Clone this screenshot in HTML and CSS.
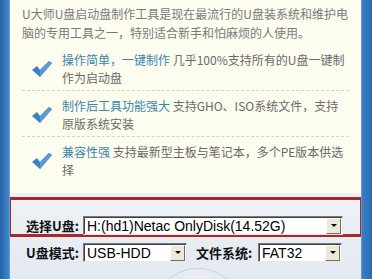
FILE: index.html
```html
<!DOCTYPE html>
<html lang="zh-CN">
<head>
  <meta charset="UTF-8">
  <title>U大师U盘启动盘制作工具</title>
  <link rel="stylesheet" href="styles.css">
</head>
<body>
  <div class="window">
    <div class="panel">

      <!-- intro -->
      <div class="intro">
        <p class="intro-text">U大师U盘启动盘制作工具是现在最流行的U盘装系统和维护电<br>脑的专用工具之一，特别适合新手和怕麻烦的人使用。</p>
        <ul class="features">
          <li class="feature">
            <svg class="check" viewBox="0 0 20 16" width="20" height="16"><path d="M0 9 L5 5 L8 9 L17 0 L20 2 L8 16 Z" fill="#3b82c4"/><path d="M8 16 L20 2 L17 0 L8 9 Z" fill="#5b9ad6"/></svg>
            <p class="feature-text"><span class="feature-title">操作简单，一键制作</span> 几乎100%支持所有的U盘一键制<br>作为启动盘</p>
          </li>
          <li class="feature">
            <svg class="check" viewBox="0 0 20 16" width="20" height="16"><path d="M0 9 L5 5 L8 9 L17 0 L20 2 L8 16 Z" fill="#3b82c4"/><path d="M8 16 L20 2 L17 0 L8 9 Z" fill="#5b9ad6"/></svg>
            <p class="feature-text"><span class="feature-title">制作后工具功能强大</span> 支持GHO、ISO系统文件，支持<br>原版系统安装</p>
          </li>
          <li class="feature">
            <svg class="check" viewBox="0 0 20 16" width="20" height="16"><path d="M0 9 L5 5 L8 9 L17 0 L20 2 L8 16 Z" fill="#3b82c4"/><path d="M8 16 L20 2 L17 0 L8 9 Z" fill="#5b9ad6"/></svg>
            <p class="feature-text"><span class="feature-title">兼容性强</span> 支持最新型主板与笔记本，多个PE版本供选<br>择</p>
          </li>
        </ul>
      </div>

      <!-- form -->
      <div class="form">
        <div class="disk-box">
          <div class="row">
            <span class="label">选择U盘:</span>
            <div class="select select-disk">
              <span class="select-value">H:(hd1)Netac OnlyDisk(14.52G)</span>
              <span class="select-btn"></span>
            </div>
          </div>
        </div>
        <div class="row row-options">
          <span class="label">U盘模式:</span>
          <div class="select select-mode">
            <span class="select-value">USB-HDD</span>
            <span class="select-btn"></span>
          </div>
          <span class="label label-fs">文件系统:</span>
          <div class="select select-fs">
            <span class="select-value">FAT32</span>
            <span class="select-btn"></span>
          </div>
        </div>
        <div class="start-btn"></div>
      </div>

    </div>
  </div>
</body>
</html>
```

FILE: styles.css
```css
body {
  margin: 0;
  width: 372px;
  height: 279px;
  overflow: hidden;
  font-family: 'Noto Sans CJK SC', sans-serif;
}

.window {
  height: 279px;
  padding: 0 11px 0 10px;
  background: linear-gradient(90deg, #2562a6 0, #3f86cb 9px, #8db6df 10px, #8db6df 361px, #3a7fc4 362px, #2a6aaf 372px);
}

.panel {
  height: 279px;
  display: flex;
  flex-direction: column;
}

.intro {
  background: #fcfcef;
  padding: 4px 12px 11px;
}

.intro-text {
  margin: 0;
  font-size: 12px;
  line-height: 19px;
  color: #7a7a7a;
  white-space: nowrap;
}

.features {
  list-style: none;
  margin: 3px 0 0;
  padding: 0;
}

.feature {
  display: flex;
  align-items: center;
  padding: 6px 0 3px;
  border-bottom: 1px dashed #d4d4c8;
}

.feature:last-child {
  border-bottom: none;
}

.check {
  flex: none;
  margin: 0 10px;
}

.feature-text {
  margin: 0;
  font-size: 12px;
  line-height: 18px;
  color: #6a6a6a;
  white-space: nowrap;
}

.feature-title {
  color: #3a86ad;
}

.form {
  flex: 1;
  min-height: 0;
  overflow: hidden;
  background: linear-gradient(#eef2f6, #e3e9f0);
  padding-top: 4px;
}

.disk-box {
  margin: 0 -2px;
  border: 3px solid #a8282e;
  padding: 16px 0 0 15px;
  height: 18px;
}

.row {
  display: flex;
  align-items: center;
  height: 19px;
}

.row-options {
  margin-top: 6px;
  padding-left: 16px;
}

.label {
  font-size: 13px;
  font-weight: bold;
  color: #111;
  width: 57px;
  white-space: nowrap;
}

.label-fs {
  width: 62px;
  margin-left: 9px;
}

.select {
  display: flex;
  align-items: center;
  height: 19px;
  box-sizing: border-box;
  background: #fff;
  border-top: 1px solid #7a7a7a;
  border-left: 1px solid #7a7a7a;
  border-right: 1px solid #e8e8e8;
  border-bottom: 1px solid #e8e8e8;
  box-shadow: inset 1px 1px 0 #404040;
}

.select-disk {
  width: 260px;
}

.select-mode {
  width: 104px;
}

.select-fs {
  width: 84px;
}

.select-value {
  flex: 1;
  padding-left: 3px;
  font-family: 'Liberation Sans', sans-serif;
  font-size: 14px;
  color: #000;
  white-space: nowrap;
  overflow: hidden;
}

.select-btn {
  flex: none;
  width: 15px;
  height: 16px;
  margin-right: 1px;
  box-sizing: border-box;
  background: #ece9d8;
  border-top: 1px solid #fff;
  border-left: 1px solid #fff;
  border-right: 1px solid #716f64;
  border-bottom: 1px solid #716f64;
  display: flex;
  align-items: center;
  justify-content: center;
}

.select-btn::after {
  content: '';
  border-left: 3px solid transparent;
  border-right: 3px solid transparent;
  border-top: 3px solid #000;
}

.start-btn {
  width: 90px;
  height: 90px;
  margin: 7px 0 0 143px;
  border-radius: 50%;
  background: radial-gradient(circle at 50% 30%, #f4f7fa, #d6dee8 70%);
  box-shadow: 0 -1px 0 #c3cdd9;
}
```
